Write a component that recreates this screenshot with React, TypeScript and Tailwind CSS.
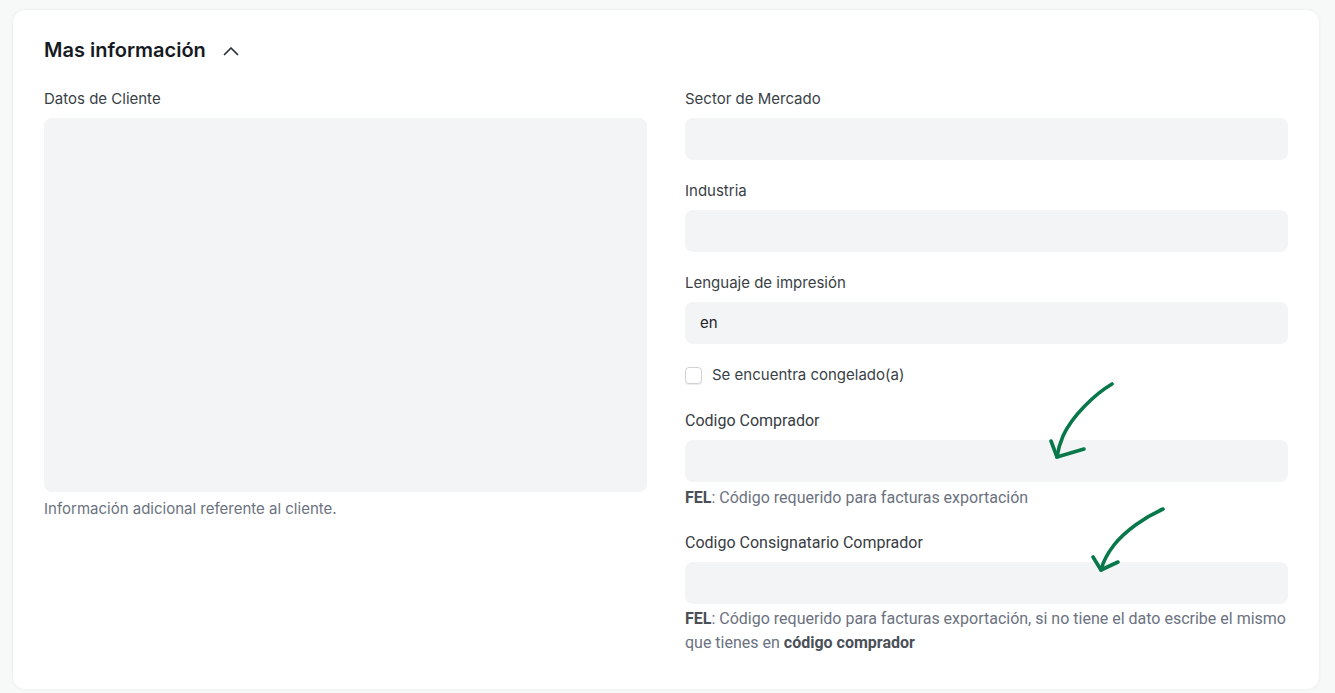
import { useState } from "react";

const inter = { fontFamily: "Inter, 'Noto Sans', sans-serif" };
const roboto = { fontFamily: "Roboto, 'Liberation Sans', sans-serif" };

const Field = ({ label, value, roboto: useRoboto }: { label: string; value?: string; roboto?: boolean }) => (
  <div className="flex flex-col">
    <label
      className={useRoboto ? "text-base leading-[22px] text-[#383c43]" : "text-[15px] leading-[22px] text-[#3a3f47]"}
      style={useRoboto ? roboto : inter}
    >
      {label}
    </label>
    <div className="mt-2 h-[42px] rounded-lg bg-[#f3f4f6] px-[15px] flex items-center text-[15px] text-[#1f2328]">
      {value}
    </div>
  </div>
);

const Arrow = ({ className, d, head }: { className: string; d: string; head: string }) => (
  <svg className={className} viewBox="0 0 100 80" fill="none" stroke="#08784a" strokeWidth="3.6" strokeLinecap="round" strokeLinejoin="round">
    <path d={d} />
    <path d={head} />
  </svg>
);

export default function App() {
  const [frozen, setFrozen] = useState(false);

  return (
    <div className="min-h-[693px] bg-[#f7f8f8] pl-[13px] pr-4 pt-[10px] pb-1" style={inter}>
      <div className="relative rounded-xl bg-white shadow-[0_0_3px_rgba(0,0,0,0.08)] px-[31px] pt-[26px] pb-[34px]">
        <div className="flex items-center gap-[17px]">
          <h2 className="text-xl leading-7 font-semibold text-[#161a22]">Mas información</h2>
          <svg width="16" height="10" viewBox="0 0 16 10" fill="none" stroke="#2b2f36" strokeWidth="1.7" strokeLinecap="round" strokeLinejoin="round" className="mt-[2px]">
            <path d="M1.5 8.5 L8 2 L14.5 8.5" />
          </svg>
        </div>

        <div className="mt-[24px] grid grid-cols-2 gap-x-[38px]">
          {/* left column */}
          <div className="flex flex-col">
            <label className="text-[15px] leading-[22px] text-[#3a3f47]">Datos de Cliente</label>
            <textarea className="mt-2 h-[374px] w-full resize-none rounded-lg bg-[#f3f4f6] outline-none" />
            <p className="mt-[7px] text-[15px] leading-5 text-[#6b7280]">Información adicional referente al cliente.</p>
          </div>

          {/* right column */}
          <div className="flex flex-col">
            <Field label="Sector de Mercado" />
            <div className="mt-[20px]">
              <Field label="Industria" />
            </div>
            <div className="mt-[20px]">
              <Field label="Lenguaje de impresión" value="en" />
            </div>

            <label className="mt-[21px] flex items-center gap-[10px] cursor-pointer">
              <span
                onClick={() => setFrozen(!frozen)}
                className="h-[17px] w-[17px] rounded-[4px] border border-[#cfd3d9] bg-white shadow-[0_1px_1px_rgba(0,0,0,0.08)]"
              />
              <span className="text-[15px] leading-5 text-[#3a3f47]">Se encuentra congelado(a)</span>
            </label>

            <div className="mt-[25px]">
              <Field label="Codigo Comprador" roboto />
            </div>
            <p className="mt-[4px] text-base leading-6 text-[#6b7280]" style={roboto}>
              <b className="font-bold text-[#4b5058]">FEL</b>: Código requerido para facturas exportación
            </p>

            <div className="mt-[22px]">
              <Field label="Codigo Consignatario Comprador" roboto />
            </div>
            <p className="mt-[3px] text-base leading-6 text-[#6b7280]" style={roboto}>
              <b className="font-bold text-[#4b5058]">FEL</b>: Código requerido para facturas exportación, si no tiene el dato escribe el mismo que tienes en{" "}
              <b className="font-bold text-[#4b5058]">código comprador</b>
            </p>
          </div>
        </div>

        {/* annotation arrows */}
        <Arrow
          className="absolute left-[1027px] top-[372px] h-[80px] w-[100px] pointer-events-none"
          d="M72 2 C55 12 32 34 23 54 C20 61 18 68 17 75"
          head="M11 59 L17 75 L44 67"
        />
        <Arrow
          className="absolute left-[1057px] top-[497px] h-[80px] w-[100px] pointer-events-none"
          d="M93 2 C75 10 55 24 44 38 C37 47 33 55 31 63"
          head="M23 50 L31 63 L48 55"
        />
      </div>
    </div>
  );
}
